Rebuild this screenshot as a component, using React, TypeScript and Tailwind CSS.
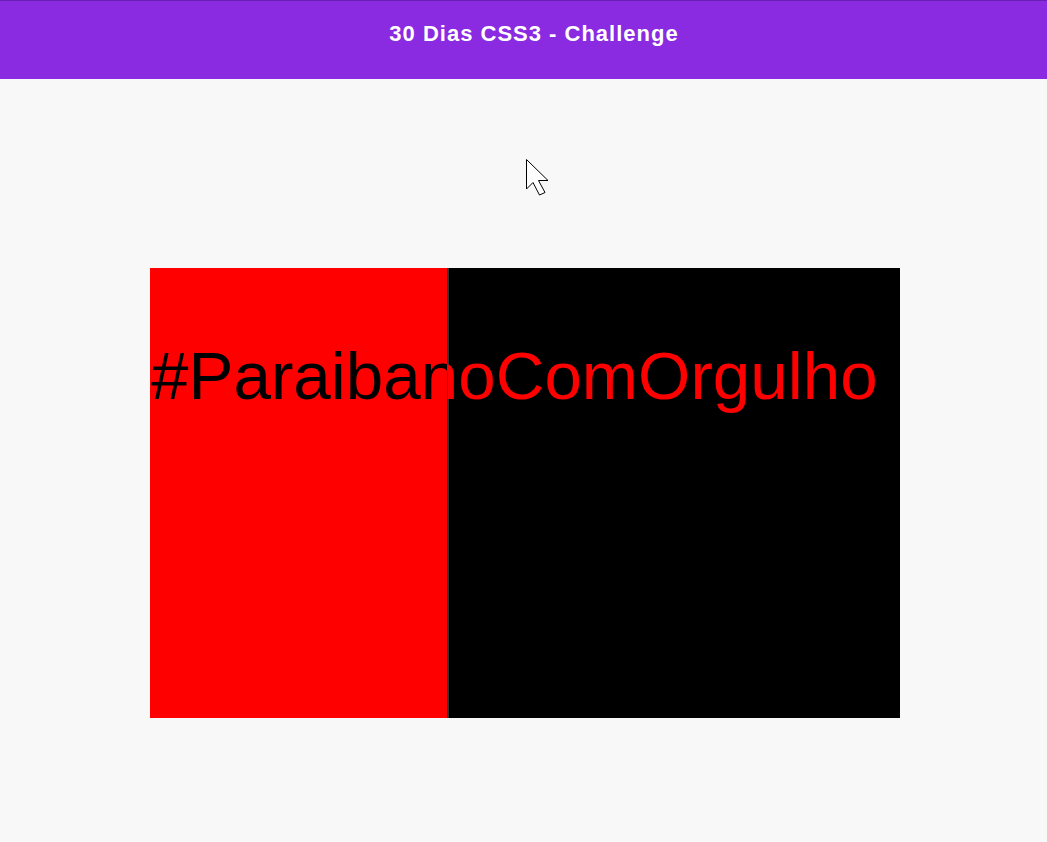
export default function App() {
  return (
    <div className="min-h-screen bg-[#f8f8f8]" style={{ fontFamily: '"Liberation Sans", Arial, sans-serif' }}>
      <header className="h-[79px] bg-[#8a2be2] border-t border-[#6a1fb0] flex justify-center pt-[20px]">
        <h1 className="ml-[21px] text-white text-[22px] leading-[25px] tracking-[1px] font-bold">30 Dias CSS3 - Challenge</h1>
      </header>

      <main className="relative pt-[189px] flex justify-center">
        <svg className="absolute left-[525px] top-[79px]" width="24" height="38" viewBox="-1 -1 24 38">
          <path d="M0.5 0.5 L0.5 30 L7 23.5 L13.5 36 L19 33.5 L12.5 21.5 L22 21.5 Z" fill="#fff" stroke="#000" strokeWidth="1" strokeLinejoin="miter" />
        </svg>

        <div className="relative w-[750px] h-[450px] flex ml-[3px]">
          <div className="w-[297px] bg-[#ff0000]"></div>
          <div className="w-[2px] bg-[#333333]"></div>
          <div className="flex-1 bg-black"></div>
          <p className="absolute left-[1px] top-[69px] text-[67.4px] leading-[normal] whitespace-nowrap bg-[linear-gradient(to_right,#000_296px,#ff0000_296px)] bg-clip-text text-transparent">
            #ParaibanoComOrgulho
          </p>
        </div>
      </main>
    </div>
  )
}
